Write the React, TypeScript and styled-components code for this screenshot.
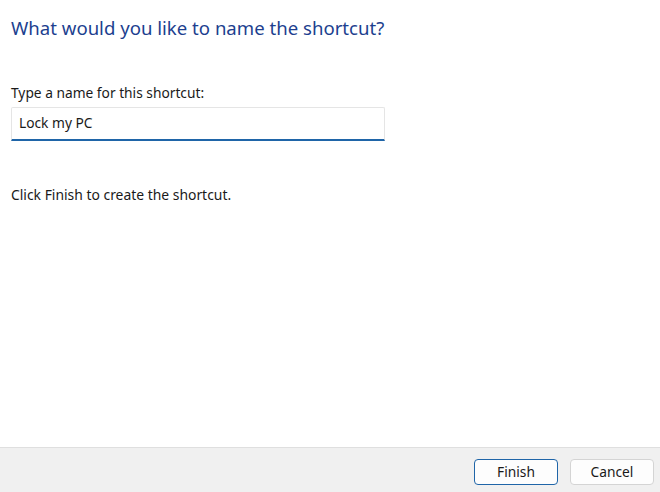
import React from "react";
import styled, { createGlobalStyle } from "styled-components";

const Global = createGlobalStyle`
  html, body { margin: 0; padding: 0; background: #ffffff; }
  body { font-family: "Noto Sans", "Open Sans", sans-serif; }
  #root { width: 660px; height: 492px; }
`;

const Window = styled.div`
  width: 660px;
  height: 492px;
  display: flex;
  flex-direction: column;
  background: #ffffff;
`;

const Content = styled.div`
  flex: 1;
  display: flex;
  flex-direction: column;
  padding: 14px 0 0 11px;
`;

const Title = styled.h1`
  margin: 0;
  font-family: "Noto Sans", sans-serif;
  font-weight: 400;
  font-size: 18.6px;
  line-height: 28px;
  color: #1d3f8f;
`;

const Label = styled.label`
  margin-top: 42px;
  font-size: 13.75px;
  line-height: 18px;
  color: #1a1a1a;
`;

const NameInput = styled.input`
  margin-top: 5px;
  width: 374px;
  height: 34px;
  box-sizing: border-box;
  border: 1px solid #e5e5e5;
  border-bottom: 2px solid #1f65a8;
  border-radius: 2px 2px 0 0;
  padding: 0 7px 2px;
  font-family: "Noto Sans", sans-serif;
  font-size: 13.75px;
  color: #1a1a1a;
  outline: none;
  background: #ffffff;
`;

const Note = styled.p`
  margin: 45px 0 0;
  font-size: 13.9px;
  line-height: 18px;
  color: #1a1a1a;
`;

const Footer = styled.div`
  height: 45px;
  box-sizing: border-box;
  border-top: 1px solid #dfdfdf;
  background: #f0f0f0;
  display: flex;
  justify-content: flex-end;
  align-items: flex-start;
  gap: 12px;
  padding: 11px 6px 0 0;
`;

const Button = styled.button<{ $primary?: boolean }>`
  width: 84px;
  height: 26px;
  box-sizing: border-box;
  border-radius: 4px;
  border: 1px solid ${(p) => (p.$primary ? "#1f65a8" : "#d4d4d4")};
  background: #fdfdfd;
  font-family: "Noto Sans", sans-serif;
  font-size: 13.75px;
  color: #1a1a1a;
  padding: 0 0 1px;
`;

export default function App() {
  return (
    <>
      <Global />
      <Window>
        <Content>
          <Title>What would you like to name the shortcut?</Title>
          <Label htmlFor="name">Type a name for this shortcut:</Label>
          <NameInput id="name" defaultValue="Lock my PC" />
          <Note>Click Finish to create the shortcut.</Note>
        </Content>
        <Footer>
          <Button $primary>Finish</Button>
          <Button>Cancel</Button>
        </Footer>
      </Window>
    </>
  );
}
